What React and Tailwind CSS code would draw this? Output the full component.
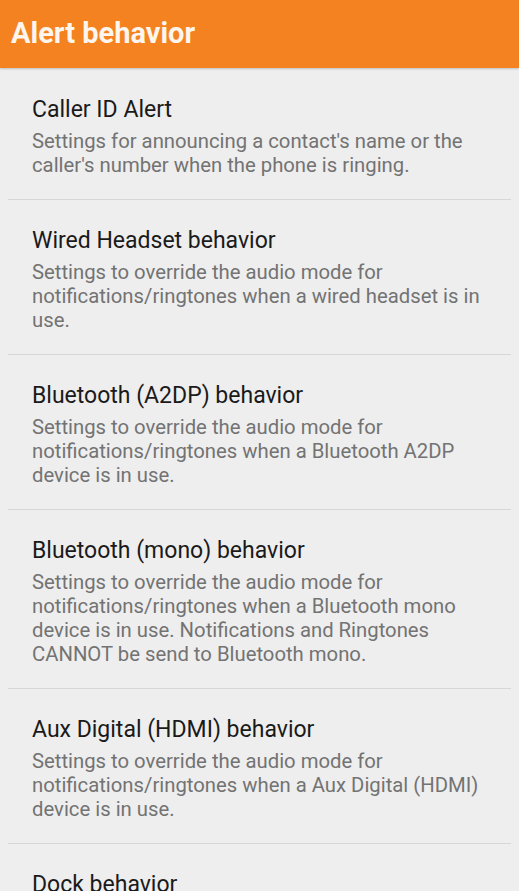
const items = [
  {
    title: "Caller ID Alert",
    desc: "Settings for announcing a contact's name or the caller's number when the phone is ringing.",
  },
  {
    title: "Wired Headset behavior",
    desc: "Settings to override the audio mode for notifications/ringtones when a wired headset is in use.",
  },
  {
    title: "Bluetooth (A2DP) behavior",
    desc: "Settings to override the audio mode for notifications/ringtones when a Bluetooth A2DP device is in use.",
  },
  {
    title: "Bluetooth (mono) behavior",
    desc: "Settings to override the audio mode for notifications/ringtones when a Bluetooth mono device is in use. Notifications and Ringtones CANNOT be send to Bluetooth mono.",
  },
  {
    title: "Aux Digital (HDMI) behavior",
    desc: "Settings to override the audio mode for notifications/ringtones when a Aux Digital (HDMI) device is in use.",
  },
  {
    title: "Dock behavior",
    desc: "Settings to override the audio mode for notifications/ringtones when a dock is in use.",
  },
];

export default function App() {
  return (
    <div className="w-[519px] h-[891px] overflow-hidden bg-[#eeeeee] font-['Roboto',sans-serif]">
      <div className="h-[68px] bg-[#f58220] flex items-center px-[11px] shadow-[0_1px_2px_rgba(0,0,0,0.2)] relative">
        <h1 className="text-[29px] font-bold text-[#fdf6ee] leading-none -mt-[2px]">Alert behavior</h1>
      </div>
      <div className="pt-px">
        {items.map((it) => (
          <div key={it.title} className="mx-2 border-b border-[#d6d6d6]">
            <div className="pl-6 pr-6 pt-[27px] pb-[22px]">
              <div className="text-[23px] leading-[28px] text-[#1a1a1a]">{it.title}</div>
              <div className="mt-[5px] text-[20.3px] leading-[24px] text-[#737373]">{it.desc}</div>
            </div>
          </div>
        ))}
      </div>
    </div>
  );
}
